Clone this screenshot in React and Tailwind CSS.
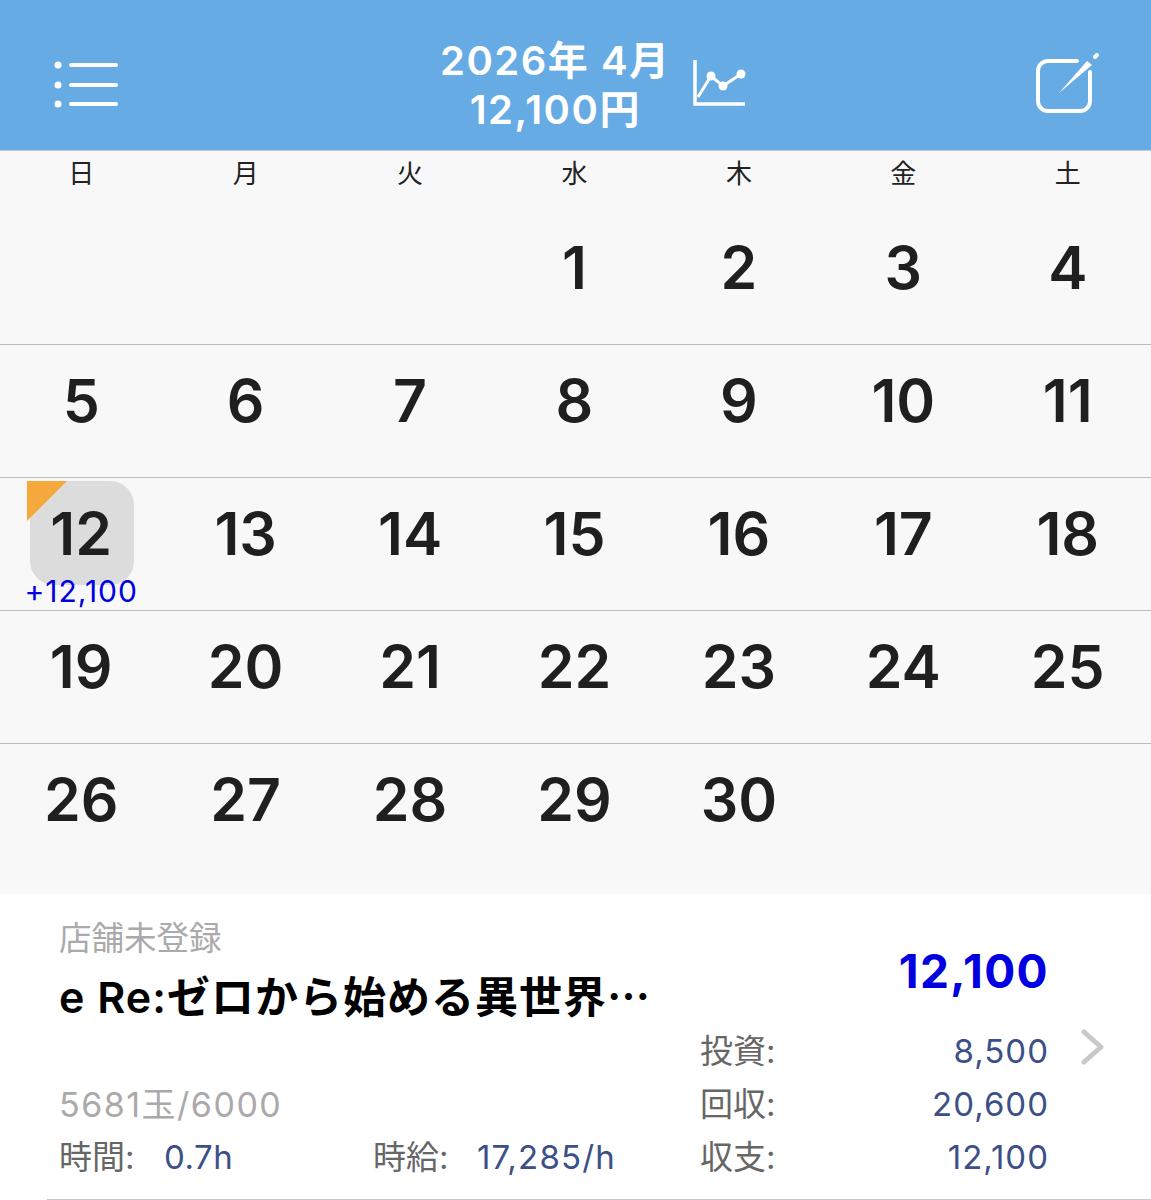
const WEEK_DAYS = ['日', '月', '火', '水', '木', '金', '土']

const WEEKS = [
  [null, null, null, 1, 2, 3, 4],
  [5, 6, 7, 8, 9, 10, 11],
  [12, 13, 14, 15, 16, 17, 18],
  [19, 20, 21, 22, 23, 24, 25],
  [26, 27, 28, 29, 30, null, null],
]

const FONT = "font-['Inter','Noto_Sans_CJK_JP',sans-serif]"

function MenuIcon() {
  return (
    <svg width="64" height="48" viewBox="0 0 64 48" fill="none" stroke="white" strokeWidth="4" strokeLinecap="round">
      <circle cx="4" cy="4" r="3.5" fill="white" stroke="none" />
      <circle cx="4" cy="24" r="3.5" fill="white" stroke="none" />
      <circle cx="4" cy="43" r="3.5" fill="white" stroke="none" />
      <path d="M17 4h45M17 24h45M17 43h45" />
    </svg>
  )
}

function ChartIcon() {
  return (
    <svg width="54" height="48" viewBox="0 0 54 48" fill="none" stroke="white">
      <path d="M2 1v44h50" strokeWidth="3.5" />
      <path d="M5 38L18 17L30 27L48 15" strokeWidth="3" />
      <circle cx="18" cy="17" r="4.5" fill="white" stroke="none" />
      <circle cx="30" cy="27" r="4.5" fill="white" stroke="none" />
      <circle cx="48" cy="15" r="4.5" fill="white" stroke="none" />
    </svg>
  )
}

function ComposeIcon() {
  return (
    <svg width="66" height="64" viewBox="0 0 66 64" fill="none" stroke="white" strokeLinecap="round">
      <path d="M42 9H13a10 10 0 0 0-10 10v30a10 10 0 0 0 10 10h32a10 10 0 0 0 10-10V20" strokeWidth="4" />
      <path d="M24 41L52 9L57 13Z" fill="white" stroke="none" />
      <path d="M60 5l2-2" strokeWidth="4" />
    </svg>
  )
}

function ChevronIcon() {
  return (
    <svg width="24" height="38" viewBox="0 0 24 38" fill="none" stroke="#c8c8c8" strokeWidth="5" strokeLinecap="round" strokeLinejoin="round">
      <path d="M4 4l17 15L4 34" />
    </svg>
  )
}

function DayCell({ day }) {
  const hasRecord = day === 12
  return (
    <div className="relative flex flex-col items-center pt-[21px] pr-[2px]">
      {hasRecord && (
        <>
          <div className="absolute left-[30px] top-[3px] h-[104px] w-[104px] rounded-[24px] bg-[#dcdcdc]" />
          <div className="absolute left-[27px] top-[3px] h-[40px] w-[40px] bg-[#f5a83c] [clip-path:polygon(0_0,100%_0,0_100%)]" />
        </>
      )}
      {day && <span className="relative text-[59px] leading-[70px] font-semibold text-[#1f1f1f]">{day}</span>}
      {hasRecord && (
        <span className="absolute left-0 right-[2px] top-[96px] text-center text-[30px] leading-[34px] tracking-[1px] text-[#0000e0]">+12,100</span>
      )}
    </div>
  )
}

function StatRow({ label, value }) {
  return (
    <div className="flex h-[53px] items-center justify-between text-[33px]">
      <span className="text-[#666666]">{label}</span>
      <span className="tracking-[1px] text-[#3c5088]">{value}</span>
    </div>
  )
}

export default function App() {
  return (
    <div className={`h-[1200px] w-[1151px] overflow-hidden bg-white ${FONT}`}>
      {/* Header */}
      <header className="flex h-[151px] items-center border-b border-[#c4cbdc] bg-[#66abe3] pt-[20px] pl-[54px] pr-[50px] text-white">
        <MenuIcon />
        <div className="ml-[322px] flex items-center">
          <div className="flex flex-col items-center text-[40px] leading-[49px] font-semibold tracking-[1.5px]">
            <span>2026年 4月</span>
            <span>12,100円</span>
          </div>
          <div className="ml-[22px] mt-[-4px]">
            <ChartIcon />
          </div>
        </div>
        <div className="ml-auto mt-[-2px]">
          <ComposeIcon />
        </div>
      </header>

      {/* Calendar */}
      <div className="bg-[#f8f8f8]">
        <div className="grid h-[61px] grid-cols-7 pt-[3px]">
          {WEEK_DAYS.map((d) => (
            <div key={d} className="pr-[2px] text-center text-[26px] leading-[40px] text-[#222222]">{d}</div>
          ))}
        </div>
        {WEEKS.map((week, i) => (
          <div
            key={i}
            className={`grid grid-cols-7 ${i === 4 ? 'h-[150px]' : 'h-[133px] border-b border-[#bdbdbd]'}`}
          >
            {week.map((day, j) => (
              <DayCell key={j} day={day} />
            ))}
          </div>
        ))}
      </div>

      {/* Record */}
      <div className="ml-[47px] flex h-[306px] border-b border-[#c8c8c8] pb-[15px] pl-[12px]">
        <div className="flex w-[641px] flex-col">
          <div className="mt-[25px] text-[32.5px] leading-[40px] text-[#aaaaaa]">店舗未登録</div>
          <div className="mt-[13px] text-[43px] leading-[50px] font-semibold tracking-[1px] text-black">e Re:ゼロから始める異世界⋯</div>
          <div className="mt-auto flex h-[53px] items-center text-[34px] tracking-[1.5px] text-[#aaaaaa]">5681玉/6000</div>
          <div className="flex h-[53px] items-center text-[33px]">
            <span className="w-[105px] text-[#666666]">時間:</span>
            <span className="w-[209px] tracking-[0.5px] text-[#3c5088]">0.7h</span>
            <span className="w-[104px] text-[#666666]">時給:</span>
            <span className="tracking-[1.2px] text-[#3c5088]">17,285/h</span>
          </div>
        </div>
        <div className="flex w-[349px] flex-col">
          <div className="mt-[50px] text-right text-[46px] leading-[54px] font-bold tracking-[1.4px] text-[#0000e0]">12,100</div>
          <div className="mt-auto">
            <StatRow label="投資:" value="8,500" />
            <StatRow label="回収:" value="20,600" />
            <StatRow label="収支:" value="12,100" />
          </div>
        </div>
        <div className="ml-[31px] mt-[134px]">
          <ChevronIcon />
        </div>
      </div>
    </div>
  )
}
